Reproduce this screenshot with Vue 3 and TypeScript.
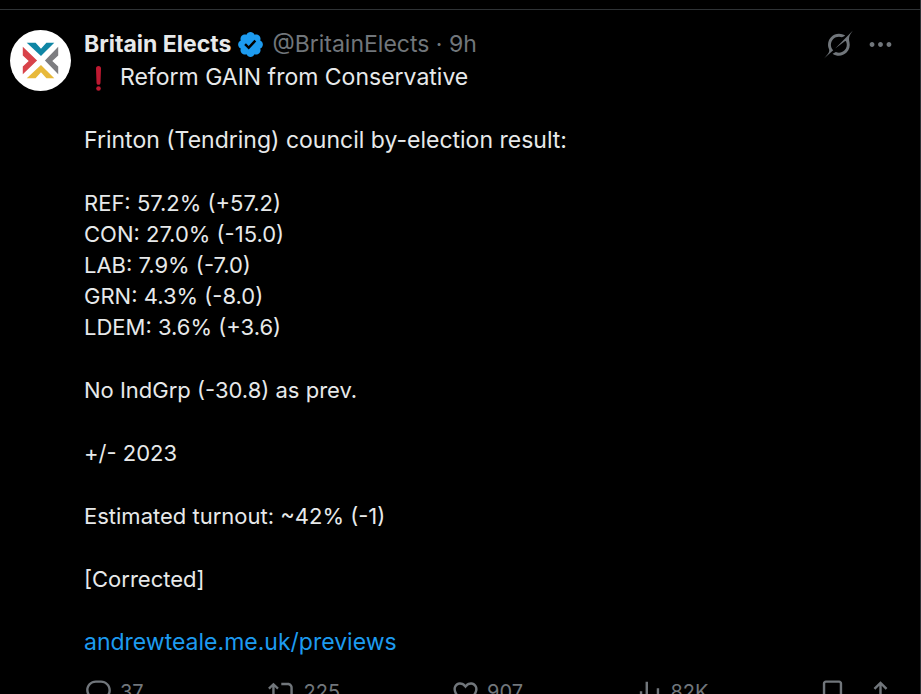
<script setup lang="ts">
interface Action {
  name: string
  label: string
  count: string
  path: string
}

const paragraphs: string[][] = [
  [
    'REF: 57.2% (+57.2)',
    'CON: 27.0% (-15.0)',
    'LAB: 7.9% (-7.0)',
    'GRN: 4.3% (-8.0)',
    'LDEM: 3.6% (+3.6)',
  ],
  ['No IndGrp (-30.8) as prev.'],
  ['+/- 2023'],
  ['Estimated turnout: ~42% (-1)'],
  ['[Corrected]'],
]

const actions: Action[] = [
  {
    name: 'reply',
    label: 'Reply',
    count: '37',
    path: 'M1.751 10c0-4.42 3.584-8 8.005-8h4.366c4.49 0 8.129 3.64 8.129 8.13 0 2.96-1.607 5.68-4.196 7.11l-8.054 4.46v-3.69h-.067c-4.49.1-8.183-3.51-8.183-8.01zm8.005-6c-3.317 0-6.005 2.69-6.005 6 0 3.37 2.77 6.08 6.138 6.01l.351-.01h1.761v2.3l5.087-2.81c1.951-1.08 3.163-3.13 3.163-5.36 0-3.39-2.744-6.13-6.129-6.13H9.756z',
  },
  {
    name: 'repost',
    label: 'Repost',
    count: '225',
    path: 'M4.5 3.88l4.432 4.14-1.364 1.46L5.5 7.55V16c0 1.1.896 2 2 2H13v2H7.5c-2.209 0-4-1.79-4-4V7.55L1.432 9.48.068 8.02 4.5 3.88zM16.5 6H11V4h5.5c2.209 0 4 1.79 4 4v8.45l2.068-1.93 1.364 1.46-4.432 4.14-4.432-4.14 1.364-1.46 2.068 1.93V8c0-1.1-.896-2-2-2z',
  },
  {
    name: 'like',
    label: 'Like',
    count: '907',
    path: 'M16.697 5.5c-1.222-.06-2.679.51-3.89 2.16l-.805 1.09-.806-1.09C9.984 6.01 8.526 5.44 7.304 5.5c-1.243.07-2.349.78-2.91 1.91-.552 1.12-.633 2.78.479 4.82 1.074 1.97 3.257 4.27 7.129 6.61 3.87-2.34 6.052-4.64 7.126-6.61 1.111-2.04 1.03-3.7.477-4.82-.561-1.13-1.666-1.84-2.908-1.91zm4.187 7.69c-1.351 2.48-4.001 5.12-8.379 7.67l-.503.3-.504-.3c-4.379-2.55-7.029-5.19-8.382-7.67-1.36-2.5-1.41-4.86-.514-6.67.887-1.79 2.647-2.91 4.601-3.01 1.651-.09 3.368.56 4.798 2.01 1.429-1.45 3.146-2.1 4.796-2.01 1.954.1 3.714 1.22 4.601 3.01.896 1.81.846 4.17-.514 6.67z',
  },
  {
    name: 'views',
    label: 'Views',
    count: '82K',
    path: 'M8.75 21V3h2v18h-2zM18 21V8.5h2V21h-2zM4 21l.004-10h2L6 21H4zm9.248 0v-7h2v7h-2z',
  },
]
</script>

<template>
  <main class="timeline">
    <article class="post">
      <a class="avatar" href="#" aria-label="Britain Elects">
        <svg viewBox="0 0 62 62" aria-hidden="true">
          <circle cx="31" cy="31" r="31" fill="#fff" />
          <path fill="#0f86a5" d="M17 13h9l5.500 6 5.500-6h8L31.500 26.500z" />
          <path fill="#d8434a" d="M13 17v9l6 5.500-6 5.500v8L27.500 31z" />
          <path fill="#7d7d80" d="M49 17v9l-6 5.500 6 5.500v8L35.500 31z" />
          <path fill="#e8b93a" d="M17 49h9l5.500-6 5.500 6h8L31.500 35.500z" />
        </svg>
      </a>

      <div class="body">
        <header class="head">
          <a class="name" href="#">Britain Elects</a>
          <svg class="icon verified" viewBox="0 0 22 22" role="img" aria-label="Verified account">
            <path d="M20.396 11c-.018-.646-.215-1.275-.57-1.816-.354-.54-.852-.972-1.438-1.246.223-.607.27-1.264.14-1.897-.131-.634-.437-1.218-.882-1.687-.47-.445-1.053-.75-1.687-.882-.633-.13-1.29-.083-1.897.14-.273-.587-.704-1.086-1.245-1.44S11.647 1.620 11 1.604c-.646.017-1.273.213-1.813.568s-.969.854-1.240 1.440c-.608-.223-1.267-.272-1.902-.140-.635.130-1.220.436-1.690.882-.445.470-.749 1.055-.878 1.688-.130.633-.080 1.290.144 1.896-.587.274-1.087.705-1.443 1.245-.356.540-.555 1.170-.574 1.817.020.647.218 1.276.574 1.817.356.540.856.972 1.443 1.245-.224.606-.274 1.263-.144 1.896.130.634.433 1.218.877 1.688.470.443 1.054.747 1.687.878.633.132 1.290.084 1.897-.136.274.586.705 1.084 1.246 1.439.540.354 1.170.551 1.816.569.647-.016 1.276-.213 1.817-.567s.972-.854 1.245-1.440c.604.239 1.266.296 1.903.164.636-.132 1.220-.447 1.680-.907.460-.460.776-1.044.908-1.681s.075-1.299-.165-1.903c.586-.274 1.084-.705 1.439-1.246.354-.540.551-1.170.569-1.816zM9.662 14.850l-3.429-3.428 1.293-1.302 2.072 2.072 4.400-4.794 1.347 1.246z" />
          </svg>
          <span class="meta">@BritainElects · 9h</span>
          <div class="tools">
            <button type="button" aria-label="Explain this post">
              <svg class="icon" viewBox="0 0 33 32" aria-hidden="true">
                <path d="M12.745 20.54l10.97-8.19c.539-.4 1.307-.244 1.564.38 1.349 3.288.746 7.241-1.938 9.955-2.683 2.714-6.417 3.31-9.83 1.954l-3.728 1.745c5.347 3.697 11.84 2.782 15.898-1.324 3.219-3.255 4.216-7.692 3.284-11.693l.008.009c-1.351-5.878.332-8.227 3.782-13.031L33 0l-4.54 4.59v-.014L12.743 20.544m-2.263 1.987c-3.837-3.707-3.175-9.446.1-12.755 2.42-2.449 6.388-3.448 9.852-1.979l3.72-1.737c-.67-.49-1.53-1.017-2.515-1.387-4.455-1.854-9.789-.931-13.41 2.728-3.483 3.523-4.579 8.94-2.697 13.561 1.405 3.454-.899 5.898-3.22 8.364C1.49 30.2.666 31.074 0 32l10.478-9.466" />
              </svg>
            </button>
            <button type="button" aria-label="More">
              <svg class="icon" viewBox="0 0 24 24" aria-hidden="true">
                <path d="M3 12c0-1.100.9-2 2-2s2 .9 2 2-.9 2-2 2-2-.9-2-2zm9 2c1.100 0 2-.9 2-2s-.9-2-2-2-2 .9-2 2 .9 2 2 2zm7 0c1.100 0 2-.9 2-2s-.9-2-2-2-2 .9-2 2 .9 2 2 2z" />
              </svg>
            </button>
          </div>
        </header>

        <div class="text">
          <p class="lead">
            <svg class="mark" viewBox="0 0 28 28" role="img" aria-label="Important">
              <path d="M14.500 2c1.600 0 2.500 1 2.500 2.500l-.5 14c0 1.500-.7 2.300-2 2.300s-2-.8-2-2.300l-.5-14C12 3 12.900 2 14.500 2z" />
              <circle cx="14.500" cy="24.500" r="2.300" />
            </svg>
            <span>Reform GAIN from Conservative</span>
          </p>
          <p class="intro">Frinton (Tendring) council by-election result:</p>
          <p v-for="(lines, i) in paragraphs" :key="i">
            <span v-for="line in lines" :key="line" class="line">{{ line }}</span>
          </p>
          <p class="source"><a class="link" href="#">andrewteale.me.uk/previews</a></p>
        </div>

        <footer class="actions">
          <div v-for="action in actions" :key="action.name" class="slot">
            <button type="button" :aria-label="action.label">
              <svg class="icon" viewBox="0 0 24 24" aria-hidden="true"><path :d="action.path" /></svg>
              <span>{{ action.count }}</span>
            </button>
          </div>
          <div class="saves">
            <button type="button" aria-label="Bookmark">
              <svg class="icon" viewBox="0 0 24 24" aria-hidden="true">
                <path d="M4 4.500C4 3.120 5.119 2 6.500 2h11C18.881 2 20 3.120 20 4.500v18.440l-8-5.710-8 5.710V4.500zM6.500 4c-.276 0-.5.220-.5.500v14.560l6-4.290 6 4.290V4.500c0-.280-.224-.500-.500-.500h-11z" />
              </svg>
            </button>
            <button type="button" aria-label="Share">
              <svg class="icon" viewBox="0 0 24 24" aria-hidden="true">
                <path d="M12 2.590l5.700 5.700-1.410 1.420L13 6.410V16h-2V6.410l-3.300 3.300-1.410-1.420L12 2.590zM21 15l-.02 3.510c0 1.380-1.120 2.490-2.500 2.490H5.500C4.110 21 3 19.880 3 18.500V15h2v3.500c0 .280.220.500.500.500h12.980c.280 0 .500-.220.500-.500L19 15h2z" />
              </svg>
            </button>
          </div>
        </footer>
      </div>
    </article>
  </main>
</template>

<style>
body {
  background: #000;
}
</style>

<style scoped>
.timeline {
  box-sizing: border-box;
  height: 100vh;
  overflow: hidden;
  padding-top: 9px;
  border-right: 1px solid #2f3336;
  background: #000;
  color: #e7e9ea;
  font-family: Inter, "Liberation Sans", sans-serif;
  font-size: 22px;
  line-height: 31px;
}

.post {
  display: flex;
  gap: 13px;
  padding: 19px 25px 16px 10px;
  border-top: 1px solid #2f3336;
}

.avatar {
  flex: none;
  width: 61px;
  height: 61px;
  margin-top: 1px;
}

.avatar svg {
  display: block;
}

.body {
  flex: 1;
  min-width: 0;
}

.head {
  display: flex;
  align-items: center;
  height: 31px;
}

.head,
.lead,
.intro,
.source {
  font-size: 23px;
}

.name {
  color: inherit;
  font-weight: 700;
  text-decoration: none;
}

.icon {
  display: block;
  flex: none;
  width: 29px;
  height: 29px;
  fill: currentColor;
}

.verified {
  margin: 0 7px 0 5px;
  color: #1d9bf0;
}

.meta {
  color: #71767b;
}

.tools {
  display: flex;
  gap: 13px;
  margin-left: auto;
}

button {
  display: flex;
  align-items: center;
  padding: 0;
  border: 0;
  background: none;
  color: #71767b;
  font: inherit;
}

.text {
  display: flex;
  flex-direction: column;
  gap: 32px;
  padding-top: 2px;
}

p {
  margin: 0;
}

.lead {
  display: flex;
  align-items: center;
  gap: 8px;
}

.mark {
  width: 28px;
  height: 28px;
  fill: #be1931;
}

.line {
  display: block;
}

.link {
  color: #1d9bf0;
  text-decoration: none;
}

.actions {
  display: flex;
  padding-top: 19px;
  font-size: 20px;
}

.slot {
  flex: 1;
}

.slot button {
  gap: 7px;
}

.saves {
  display: flex;
  gap: 19px;
}
</style>
